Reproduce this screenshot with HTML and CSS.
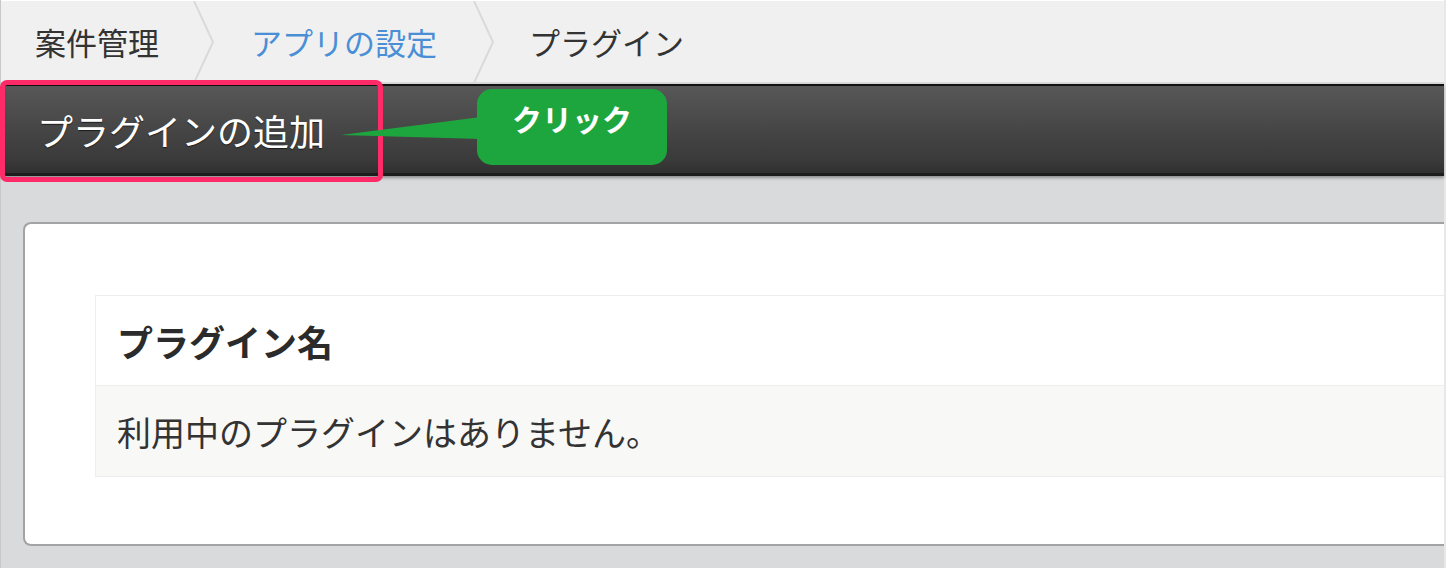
FILE: index.html
```html
<!DOCTYPE html>
<html lang="ja">
<head>
    <meta charset="UTF-8">
    <title>プラグイン</title>
    <link rel="stylesheet" href="styles.css">
</head>
<body>
    <div class="page">
        <div class="breadcrumb">
            <div class="crumb">案件管理</div>
            <svg class="sep" width="22" height="82" viewBox="0 0 22 82"><polyline points="1,0 20,41 1,82" fill="none" stroke="#dadada" stroke-width="2"/></svg>
            <div class="crumb link">アプリの設定</div>
            <svg class="sep" width="22" height="82" viewBox="0 0 22 82"><polyline points="1,0 20,41 1,82" fill="none" stroke="#dadada" stroke-width="2"/></svg>
            <div class="crumb">プラグイン</div>
        </div>

        <div class="toolbar">
            <div class="add-btn">プラグインの追加</div>

            <!-- 注釈 -->
            <div class="mark"></div>
            <svg class="tail" width="150" height="40" viewBox="0 0 150 40"><polygon points="0,24 140,6 140,28" fill="#1ea63e"/></svg>
            <div class="callout">クリック</div>
        </div>

        <div class="content">
            <div class="card">
                <div class="plugin-table">
                    <div class="row head">プラグイン名</div>
                    <div class="row empty">利用中のプラグインはありません。</div>
                </div>
            </div>
        </div>
    </div>
</body>
</html>
```

FILE: styles.css
```css
body {
    margin: 0;
    font-family: "Noto Sans CJK JP", "Noto Sans", sans-serif;
    background: #d9dadc;
    overflow: hidden;
}
.page {
    width: 1446px;
    height: 568px;
    border-left: 1px solid #c8c8c8;
    border-right: 2px solid #e8e8e8;
    box-sizing: border-box;
    display: flex;
    flex-direction: column;
}
.breadcrumb {
    height: 82px;
    background: #f0f0f0;
    border-top: 1px solid #fff;
    box-sizing: border-box;
    display: flex;
    align-items: center;
}
.crumb {
    padding: 0 34px 0 34px;
    font-size: 31px;
    color: #333;
}
.crumb.link {
    padding: 0 36px;
    color: #4a8fd6;
}
.sep {
    display: block;
}
.toolbar {
    position: relative;
    height: 92px;
    margin-top: 2px;
    background: linear-gradient(#575757, #3a3a3a 85%, #303030);
    border-top: 2px solid #111;
    border-bottom: 3px solid #1c1c1c;
    box-shadow: 0 2px 3px rgba(0,0,0,0.35);
    box-sizing: border-box;
    display: flex;
    align-items: center;
}
.add-btn {
    padding-left: 36px;
    font-size: 36px;
    color: #fff;
    text-shadow: 0 1px 1px rgba(0,0,0,0.6);
}
.mark {
    position: absolute;
    left: -1px;
    top: -6px;
    width: 383px;
    height: 102px;
    border: 5px solid #ff2b69;
    border-radius: 7px;
    box-sizing: border-box;
}
.tail {
    position: absolute;
    left: 340px;
    top: 25px;
}
.callout {
    position: absolute;
    left: 476px;
    top: 3px;
    width: 190px;
    height: 76px;
    border-radius: 15px;
    background: #1ea63e;
    color: #fff;
    font-size: 30px;
    font-weight: bold;
    display: flex;
    justify-content: center;
    padding-top: 7px;
    box-sizing: border-box;
}
.content {
    flex: 1;
    padding: 46px 0 0 22px;
}
.card {
    height: 324px;
    background: #fff;
    border: 2px solid #a3a3a3;
    border-right: none;
    border-radius: 8px 0 0 8px;
    padding: 71px 0 0 70px;
    box-sizing: border-box;
}
.plugin-table {
    border: 1px solid #eeeeee;
    border-right: none;
}
.row {
    height: 89px;
    padding-left: 21px;
    display: flex;
    align-items: center;
    font-size: 34px;
    color: #333;
}
.row.head {
    font-size: 36px;
    font-weight: bold;
    color: #2b2b2b;
    border-bottom: 1px solid #eeeeee;
}
.row.empty {
    height: 90px;
    background: #f8f8f6;
}
```
